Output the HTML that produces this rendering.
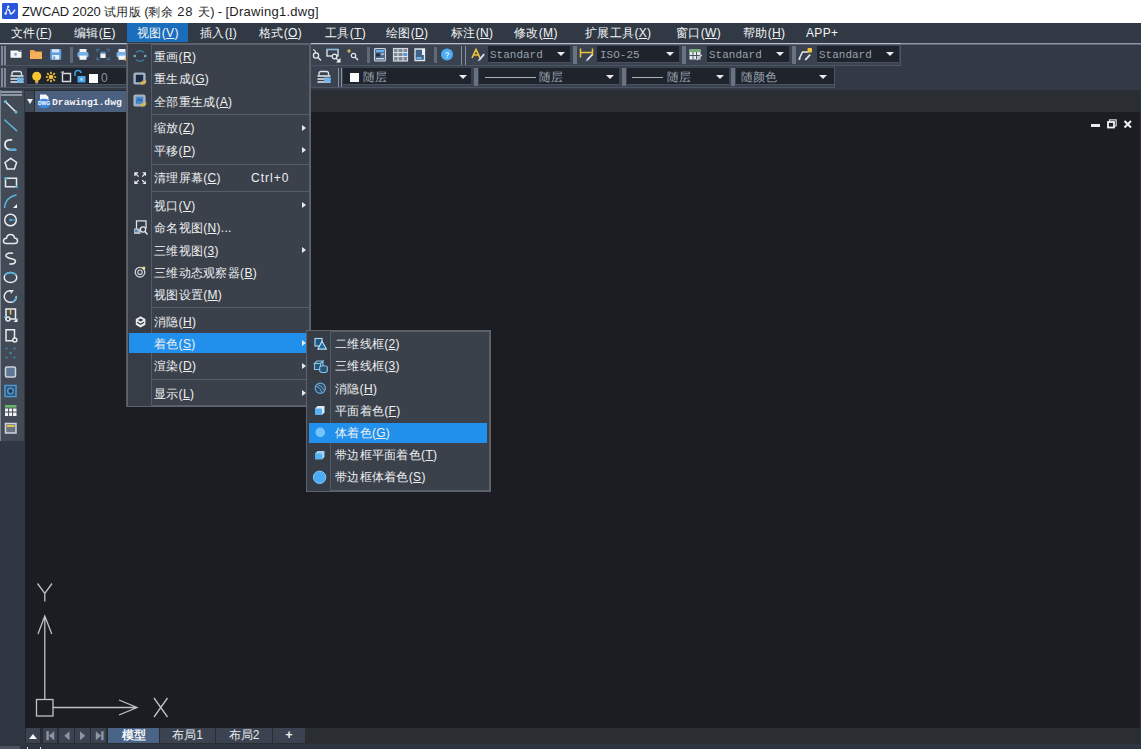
<!DOCTYPE html>
<html lang="zh">
<head>
<meta charset="utf-8">
<title>ZWCAD 2020</title>
<style>
*{box-sizing:border-box;margin:0;padding:0}
html,body{width:1141px;height:749px;overflow:hidden;background:#1b1d22}
body{position:relative;font-family:"Liberation Sans",sans-serif;font-size:12px;color:#e8ebef}
.abs,#app *{position:absolute}
#app{position:absolute;left:0;top:0;width:1141px;height:749px;overflow:hidden;background:#1b1d22}
.t{white-space:nowrap;line-height:1}
u{position:static!important;text-decoration:underline;text-underline-offset:1px}
span{position:static!important}

/* title */
#title{left:0;top:0;width:1141px;height:23px;background:#fff}
#title .txt{left:22px;top:4px;font-size:13px;color:#1e1e1e;line-height:15px;white-space:nowrap;letter-spacing:-.15px}
#title .c{font-size:12px;letter-spacing:.2px}
#title .l{letter-spacing:.28px}
#title .n{letter-spacing:.85px}
/* menubar */
#menubar{left:0;top:23px;width:1141px;height:20px;background:#313944}
#menubar .mi{top:0;height:20px;line-height:20px;font-size:12px;color:#f2f4f6;white-space:nowrap;letter-spacing:.35px}
#menubar .hl{left:127px;top:0;width:61px;height:19px;background:#1a6dbb}
#mline{left:0;top:43px;width:1141px;height:1px;background:linear-gradient(90deg,#b8c0ce 0,#b8c0ce 901px,#8e97a5 901px)}
#mline2{left:0;top:44px;width:1141px;height:1px;background:#5e6776}
/* toolbar area */
#tbarea{left:0;top:44px;width:1141px;height:46px;background:#333a45}
.tb{background:#3a424f}
.combo{background:#1e232c;border-bottom:1px solid #4a5361}
.mono{font-family:"Liberation Mono",monospace;font-size:11px;color:#9aa2ad;line-height:1;white-space:nowrap}
.cjk{font-size:12px;color:#9aa2ad;line-height:1;white-space:nowrap}
.grip{width:4px;background:#687280}
.arr{width:0;height:0;border-left:4px solid transparent;border-right:4px solid transparent;border-top:4px solid #e6e9ed}
/* tab band */
#tabband{left:0;top:90px;width:1141px;height:22px;background:#2a2d32}
#leftdock{left:0;top:89px;width:25px;height:660px;background:#303742}
#ltb{left:0;top:90px;width:24px;height:351px;background:#424a56}
/* drawing */
#draw{left:25px;top:112px;width:1116px;height:616px;background:#1b1d22}
#btband{left:25px;top:728px;width:1116px;height:16px;background:#2a2d32}
#cmdband{left:0;top:744px;width:1141px;height:5px;background:#2f3540}
/* menus */
.menu{background:#3b414a;border:1px solid #5f636b;outline:1px solid #5a5e66;outline-offset:-2px}
.menu .gut{left:0;top:0;bottom:0;background:#373d46;border-right:1px solid #545c68}
.menu .it{font-size:12px;color:#eef0f3;white-space:nowrap;line-height:14px;letter-spacing:.3px}
.menu .sep{height:1px;background:#555e6b}
.menu .sub{width:0;height:0;border-top:3.500px solid transparent;border-bottom:3.500px solid transparent;border-left:4.500px solid #e9ecef;margin-top:.5px}
.menu .hl{background:#2190ec}
</style>
</head>
<body>
<div id="app">

<div id="title">
  <svg class="abs" style="left:2px;top:3px" width="16" height="16" viewBox="0 0 16 16"><rect width="16" height="16" rx="1.200" fill="#2a56d9"/><path d="M3.700 10.400L6.100 3.800" stroke="#dfe8ff" stroke-width="1.200" fill="none" stroke-linecap="round"/><path d="M6.300 6.800q1.600.2 1.600 2.200t1 2q1.600-.2 3.800-3.800" stroke="#f2f6ff" stroke-width="1.400" fill="none" stroke-linecap="round"/><circle cx="3.700" cy="10.500" r="1.300" fill="#e8efff"/><circle cx="6.200" cy="3.700" r="1.200" fill="#e8efff"/></svg>
  <div class="txt" id="tt">ZWCAD 2020 <span class="c">试用版</span> (<span class="c">剩余</span><span class="n"> 28 </span><span class="c">天</span>) - <span class="l">[Drawing1.dwg]</span></div>
</div>

<div id="menubar">
  <div class="hl"></div>
  <div class="mi" style="left:11px">文件(<u>F</u>)</div>
  <div class="mi" style="left:74px">编辑(<u>E</u>)</div>
  <div class="mi" style="left:137px">视图(<u>V</u>)</div>
  <div class="mi" style="left:200px">插入(<u>I</u>)</div>
  <div class="mi" style="left:259px">格式(<u>O</u>)</div>
  <div class="mi" style="left:325px">工具(<u>T</u>)</div>
  <div class="mi" style="left:386px">绘图(<u>D</u>)</div>
  <div class="mi" style="left:451px">标注(<u>N</u>)</div>
  <div class="mi" style="left:514px">修改(<u>M</u>)</div>
  <div class="mi" style="left:585px">扩展工具(<u>X</u>)</div>
  <div class="mi" style="left:676px">窗口(<u>W</u>)</div>
  <div class="mi" style="left:743px">帮助(<u>H</u>)</div>
  <div class="mi" style="left:806px">APP+</div>
</div>
<div id="mline"></div>

<div id="tbarea"></div>
<div id="tabband"></div>
<div id="leftdock"></div>
<div id="ltb"></div>
<div id="draw"></div>
<div id="btband"></div>
<div id="cmdband"></div>

<!--TOOLBARS-->
<!-- toolbar row 1 -->
<div class="tb" style="left:0;top:44px;width:901px;height:22px;border-right:1px solid #4c5562;border-bottom:1px solid #4c5562"></div>
<div class="tb" style="left:0;top:66px;width:835px;height:22px;border-right:1px solid #4c5562;border-bottom:1px solid #4c5562"></div>
<!-- grips -->
<div style="left:1px;top:46px;width:2px;height:19px;background:#7f8997"></div>
<div style="left:4px;top:46px;width:2px;height:19px;background:#7f8997"></div>
<div style="left:1px;top:68px;width:2px;height:19px;background:#7f8997"></div>
<div style="left:4px;top:68px;width:2px;height:19px;background:#7f8997"></div>

<!-- row1 icons left -->
<svg style="left:9px;top:47px" width="16" height="16" viewBox="0 0 16 16"><path d="M1.5 3.5h7.5l1 1.300H12.500v6H1.5z" fill="#f4f6f8"/><circle cx="6.500" cy="7.200" r="1.500" fill="#8aa7c4"/><rect x="11" y="3" width="1.400" height="1.200" fill="#9fb4cc"/></svg>
<svg style="left:28px;top:47px" width="16" height="16" viewBox="0 0 16 16"><path d="M2 3h4.2l1.2 1.6H14V12H2z" fill="#f3a64a"/><path d="M2 5.6h12V12H2z" fill="#f7b05a"/></svg>
<svg style="left:48px;top:47px" width="16" height="16" viewBox="0 0 16 16"><path d="M2.2 2.2h11v10.4h-11z" fill="#5f9fe0"/><rect x="4" y="2.2" width="7.2" height="3.2" fill="#d9e8f7"/><rect x="4.2" y="8" width="7" height="4.6" fill="#e8f0f9"/><rect x="5.2" y="9.4" width="2" height="3.2" fill="#5f9fe0"/></svg>
<div style="left:70px;top:47px;width:3px;height:16px;background:#5f6978"></div>
<svg style="left:75px;top:47px" width="16" height="16" viewBox="0 0 16 16"><rect x="4.5" y="2" width="7" height="3.4" fill="#eef3f8"/><rect x="2.500" y="5" width="11" height="5.400" rx="1.500" fill="#78b0e8"/><rect x="4.5" y="8.6" width="7" height="4.2" fill="#f4f7fa"/></svg>
<svg style="left:95px;top:47px" width="16" height="16" viewBox="0 0 16 16"><path d="M2 5V2.500h2.500M11.500 2.500H14V5M14 10v2.500h-2.500M4.500 12.500H2V10" stroke="#3f7099" stroke-width="1.300" fill="none"/><rect x="5.400" y="4.600" width="5.200" height="2.400" fill="#4d86b8"/><rect x="5.400" y="6.600" width="5.200" height="4.400" fill="#eef3f8"/></svg>
<svg style="left:114px;top:47px" width="16" height="16" viewBox="0 0 16 16"><rect x="4.5" y="2" width="7" height="3.4" fill="#eef3f8"/><rect x="2.500" y="5" width="11" height="5.400" rx="1.500" fill="#78b0e8"/><rect x="4.5" y="8.6" width="7" height="4.2" fill="#f4f7fa"/><circle cx="12.5" cy="12" r="2" fill="#f0b240"/></svg>

<!-- row1 icons after menu -->
<svg style="left:308px;top:47px" width="16" height="16" viewBox="0 0 16 16"><path d="M5 2.500q3 1 2.500 4" stroke="#dfe5ec" stroke-width="1.2" fill="none"/><circle cx="8" cy="8.5" r="2.600" stroke="#e6ebf0" stroke-width="1.3" fill="none"/><path d="M10 10.500L13 13.500" stroke="#e6ebf0" stroke-width="1.500"/></svg>
<svg style="left:325px;top:47px" width="17" height="16" viewBox="0 0 17 16"><rect x="2" y="2.500" width="11" height="6.500" stroke="#e6ebf0" stroke-width="1.300" fill="none"/><path d="M2 2.500h11" stroke="#7cbcec" stroke-width="1.300"/><circle cx="9.500" cy="9.500" r="2.300" stroke="#e6ebf0" stroke-width="1.200" fill="#3a424f"/><path d="M11.200 11.200L13.500 13.500" stroke="#e6ebf0" stroke-width="1.400"/><path d="M15.500 11v4.500H11z" fill="#f4f6f8"/></svg>
<svg style="left:345px;top:47px" width="16" height="16" viewBox="0 0 16 16"><path d="M4 2v4M2 4h4" stroke="#e8c86a" stroke-width="1.100"/><circle cx="8.500" cy="8.500" r="2.200" stroke="#dfe5ec" stroke-width="1.200" fill="none"/><path d="M10.200 10.200L13 13" stroke="#dfe5ec" stroke-width="1.400"/></svg>
<div style="left:367px;top:47px;width:3px;height:16px;background:#5f6978"></div>
<svg style="left:372px;top:46px" width="16" height="18" viewBox="0 0 16 18"><rect x="2.500" y="2.500" width="11" height="12.500" rx="1" stroke="#c9d3de" stroke-width="1.200" fill="#4b6a8c"/><rect x="4" y="4" width="8" height="2.200" fill="#6fb0e8"/><rect x="4" y="7.500" width="4" height="3" fill="#20303f"/><rect x="9" y="7.500" width="3" height="1.200" fill="#cfd9e4"/><rect x="4" y="12" width="8" height="1.400" fill="#cfd9e4"/></svg>
<svg style="left:392px;top:46px" width="17" height="18" viewBox="0 0 17 18"><rect x="1.500" y="2.500" width="14" height="12.500" stroke="#cfd6de" stroke-width="1.200" fill="#7b8794"/><path d="M6 2.500v12.500M11 2.500v12.500M1.500 6.500h14M1.500 10.500h14" stroke="#dfe5eb" stroke-width="1"/><rect x="11.500" y="7" width="3.500" height="3" fill="#5d9ad6"/></svg>
<svg style="left:412px;top:46px" width="16" height="18" viewBox="0 0 16 18"><path d="M3 3h9.500v11.500H3z" stroke="#dfe5eb" stroke-width="1.300" fill="#3f648c"/><path d="M10 3h3v6h-3z" fill="#eef2f6"/><rect x="4.500" y="11" width="5" height="2" fill="#6fb0e8"/></svg>
<div style="left:434px;top:47px;width:3px;height:16px;background:#5f6978"></div>
<svg style="left:440px;top:48px" width="14" height="14" viewBox="0 0 14 14"><circle cx="7" cy="6.500" r="6" fill="#4dacf3"/><text x="7" y="9.600" text-anchor="middle" font-family="Liberation Sans" font-size="8.500" font-weight="bold" fill="#cfe9ff">?</text></svg>
<div style="left:460.7px;top:46px;width:1.500px;height:19px;background:#8791a0"></div>
<div style="left:464.7px;top:46px;width:1.500px;height:19px;background:#8791a0"></div>

<!-- text style -->
<svg style="left:470px;top:47px" width="16" height="16" viewBox="0 0 16 16"><path d="M2 11L6 2.500L10 11M3.600 8h4.800" stroke="#f0c23a" stroke-width="1.700" fill="none"/><path d="M8.500 12.500L13.500 6.500l1.300 1.200L10 13.500z" fill="#dfe6ee"/><path d="M8.500 12.500l1.500 1-2.500 1z" fill="#9ec3e8"/></svg>
<div class="combo" style="left:488px;top:46px;width:82px;height:17px"></div>
<div class="mono" style="left:490px;top:50px">Standard</div>
<div class="arr" style="left:557px;top:52px"></div>
<div class="grip" style="left:573px;top:46px;height:18px"></div>
<svg style="left:579px;top:47px" width="16" height="16" viewBox="0 0 16 16"><path d="M1.500 1.500v9M13.500 1.500v7M1.500 5.500h12" stroke="#f0c23a" stroke-width="1.500" fill="none"/><path d="M7.500 12.500L12.500 7l1.300 1.200L9 13.500z" fill="#dfe6ee"/><path d="M7.500 12.500l1.500 1-2.500 1z" fill="#9ec3e8"/></svg>
<div class="combo" style="left:597px;top:46px;width:82px;height:17px"></div>
<div class="mono" style="left:600px;top:50px">ISO-25</div>
<div class="arr" style="left:666px;top:52px"></div>
<div class="grip" style="left:682px;top:46px;height:18px"></div>
<svg style="left:688px;top:47px" width="16" height="16" viewBox="0 0 16 16"><rect x="1.500" y="2.500" width="11" height="10" fill="#e9edf1"/><rect x="1.500" y="2.500" width="11" height="2.600" fill="#6fb16a"/><path d="M5 5v7.500M8.500 5v7.500M1.500 8.500h11" stroke="#4a5260" stroke-width="1"/><path d="M8 12.500L13 7l1.300 1.200L9.500 13.500z" fill="#dfe6ee" stroke="#4a5260" stroke-width=".5"/></svg>
<div class="combo" style="left:707px;top:46px;width:82px;height:17px"></div>
<div class="mono" style="left:709px;top:50px">Standard</div>
<div class="arr" style="left:776px;top:52px"></div>
<div class="grip" style="left:792px;top:46px;height:18px"></div>
<svg style="left:797px;top:47px" width="17" height="16" viewBox="0 0 17 16"><path d="M2 12l3.500-7h6" stroke="#e6ebf0" stroke-width="1.500" fill="none"/><path d="M1.500 13.500l.6-3 2 1.300z" fill="#e6ebf0"/><rect x="10.500" y="1" width="4.500" height="4.500" rx="1" fill="#f1c63c"/><path d="M7.500 12.500L12.500 7l1.300 1.200L9 13.500z" fill="#dfe6ee"/></svg>
<div class="combo" style="left:817px;top:46px;width:82px;height:17px"></div>
<div class="mono" style="left:819px;top:50px">Standard</div>
<div class="arr" style="left:886px;top:52px"></div>

<!-- row 2 -->
<svg style="left:9px;top:69px" width="16" height="16" viewBox="0 0 16 16"><path d="M3 6.500V4.500q0-2 2-2h5.500q2 0 2 2v2" stroke="#dfe5eb" stroke-width="1.300" fill="none"/><path d="M1.500 7h13M1.500 10h13M1.500 13h13" stroke="#e6ebf0" stroke-width="1.400"/><rect x="8" y="8.500" width="6.500" height="5" fill="#6fb6ee"/></svg>
<div class="combo" style="left:27px;top:68px;width:282px;height:17px"></div>
<svg style="left:30px;top:69px" width="14" height="16" viewBox="0 0 14 16"><circle cx="6.700" cy="7.300" r="4.500" fill="#f6c531"/><rect x="5" y="11.200" width="3.400" height="2.300" fill="#e8b62a"/><rect x="5.400" y="13.500" width="2.600" height="1" fill="#b9bdc2"/></svg>
<svg style="left:44px;top:70px" width="14" height="14" viewBox="0 0 14 14"><circle cx="7" cy="7" r="2.300" fill="#f6c531"/><path d="M7 1.800v2.200M7 10v2.200M1.800 7h2.200M10 7h2.200M3.200 3.200l1.600 1.600M9.200 9.200l1.600 1.600M10.800 3.200l-1.600 1.600M4.800 9.200l-1.600 1.600" stroke="#e9bd38" stroke-width="1.700"/></svg>
<svg style="left:59px;top:70px" width="14" height="14" viewBox="0 0 14 14"><path d="M3.500 3.500h8v8h-8z" stroke="#d7dce2" stroke-width="1.400" fill="none"/><path d="M1 2l4-1v3z" fill="#aab2bd"/></svg>
<svg style="left:73px;top:68px" width="14" height="17" viewBox="0 0 14 17"><path d="M2 8V5.500q0-3 3-3t3 2.500" stroke="#3b9be0" stroke-width="1.700" fill="none"/><rect x="4.500" y="8" width="8" height="6.500" fill="#4aa6ea"/><rect x="7.500" y="10" width="2" height="2.500" fill="#bfe0f8"/></svg>
<div style="left:89px;top:74px;width:9px;height:9px;background:#fafbfc"></div>
<div class="t" style="left:101px;top:72px;color:#8a929e;font-size:12px">0</div>

<svg style="left:316px;top:69px" width="16" height="16" viewBox="0 0 16 16"><path d="M3 6.500V4.500q0-2 2-2h5.500q2 0 2 2v2" stroke="#dfe5eb" stroke-width="1.300" fill="none"/><path d="M1.500 7h13M1.500 10h13M1.500 13h13" stroke="#e6ebf0" stroke-width="1.400"/><rect x="8" y="8.500" width="6.500" height="5" fill="#6fb6ee"/></svg>
<div style="left:337.7px;top:68px;width:1.500px;height:19px;background:#8791a0"></div>
<div style="left:340.7px;top:68px;width:1.500px;height:19px;background:#8791a0"></div>
<div class="combo" style="left:343px;top:68px;width:128px;height:17px"></div>
<div style="left:350px;top:73px;width:9px;height:9px;background:#fafbfc"></div>
<div class="cjk" style="left:363px;top:71px">随层</div>
<div class="arr" style="left:459px;top:75px"></div>
<div class="grip" style="left:474px;top:68px;height:18px"></div>
<div class="combo" style="left:479px;top:68px;width:140px;height:17px"></div>
<div style="left:485px;top:77px;width:51px;height:1px;background:#aab1bb"></div>
<div class="cjk" style="left:539px;top:71px">随层</div>
<div class="arr" style="left:606px;top:75px"></div>
<div class="grip" style="left:622px;top:68px;height:18px"></div>
<div class="combo" style="left:627px;top:68px;width:102px;height:17px"></div>
<div style="left:632px;top:77px;width:31px;height:1px;background:#aab1bb"></div>
<div class="cjk" style="left:667px;top:71px">随层</div>
<div class="arr" style="left:716px;top:75px"></div>
<div class="grip" style="left:731px;top:68px;height:18px"></div>
<div class="combo" style="left:736px;top:68px;width:98px;height:17px"></div>
<div class="cjk" style="left:741px;top:71px">随颜色</div>
<div class="arr" style="left:819px;top:75px"></div>
<div id="mline2"></div>
<!--/TOOLBARS-->
<!--TABS-->
<!-- doc tab -->
<div style="left:25px;top:91px;width:9px;height:21px;background:#3e4653"></div>
<div style="left:27px;top:99px;width:0;height:0;border-left:3px solid transparent;border-right:3px solid transparent;border-top:5px solid #f1f3f5"></div>
<div style="left:35px;top:91px;width:92px;height:21px;background:#4b5f7f"></div>
<svg style="left:36px;top:93px" width="16" height="17" viewBox="0 0 16 17"><path d="M4 1.500h6l2.500 2.500v4H4z" fill="#f4f6f9"/><ellipse cx="8" cy="10.500" rx="6.500" ry="4.800" fill="#3f86dc"/><text x="8" y="12.300" text-anchor="middle" font-family="Liberation Sans" font-size="5" font-weight="bold" fill="#fff">DWG</text></svg>
<div class="t" style="left:52px;top:98px;font-family:'Liberation Mono',monospace;font-weight:bold;font-size:9.7px;color:#f4f6f8">Drawing1.dwg</div>

<!-- window controls -->
<div style="left:1091px;top:124px;width:9px;height:3px;background:#e9ecef"></div>
<svg style="left:1107px;top:119px" width="10" height="10" viewBox="0 0 10 10"><path d="M2.500 2.500V.8H9.200V7H7.500" stroke="#cfd3d8" stroke-width="1.200" fill="none"/><rect x="1" y="3" width="6" height="5.500" stroke="#f1f3f5" stroke-width="1.800" fill="none"/></svg>
<svg style="left:1123px;top:119px" width="10" height="10" viewBox="0 0 10 10"><path d="M1.500 2l6.500 6.500M8 2L1.500 8.500" stroke="#f1f3f5" stroke-width="2"/></svg>
<!--/TABS-->
<!--LEFTICONS-->
<!-- left toolbar grips -->
<div style="left:0;top:91px;width:22px;height:2px;background:#8d97a4"></div>
<div style="left:0;top:94px;width:22px;height:2px;background:#8d97a4"></div>
<div style="left:0;top:90px;width:1px;height:351px;background:#7d8795"></div>
<svg style="left:0;top:97px" width="23" height="345" viewBox="0 0 23 345">
 <g fill="none" stroke="#e8ebef" stroke-width="1.500" stroke-linecap="round">
  <!-- line y=9.5 (106.5) -->
  <path d="M5.300 4.500L16 15" stroke="#e8ebef" stroke-width="1.500"/><circle cx="5.300" cy="4.500" r="1.600" fill="#62b6e6" stroke="none"/><circle cx="16" cy="15" r="1.600" fill="#62b6e6" stroke="none"/>
  <!-- xline 125 => 28 -->
  <path d="M4.700 23L16.700 33.700" stroke="#5ab5dc" stroke-width="1.500" stroke-dasharray="4 1.200"/>
  <!-- polyline 144 => 47 -->
  <path d="M11.500 42.800q-6.500-.3-6.500 4.500t5 5.400h5.500" stroke-width="1.800"/><path d="M9.500 52.800h6" stroke="#4fb0e0" stroke-width="2"/>
  <!-- polygon 163 => 66 -->
  <path d="M10.800 61.300l5.800 4.200-2.200 6.500h-7.200l-2.200-6.500z"/>
  <!-- rectangle 182 => 85 -->
  <path d="M5.500 81.300h11v8.500h-11z"/><circle cx="5.500" cy="81.300" r="1.400" fill="#4fb0e0" stroke="none"/><circle cx="16.500" cy="89.800" r="1.400" fill="#4fb0e0" stroke="none"/>
  <!-- arc 201 => 104 -->
  <path d="M4.500 110.500q1-10 11.500-12.500" stroke="#5ab0dc" stroke-width="1.600"/><path d="M17 107v4h-4z" fill="#f1f3f5" stroke="none"/>
  <!-- circle 220 => 123 -->
  <circle cx="10.500" cy="123" r="5.800"/><circle cx="10.500" cy="123" r="1.300" fill="#4fb0e0" stroke="none"/><path d="M10.500 123h5" stroke="#4fb0e0" stroke-width="1"/>
  <!-- cloud 239 => 142 -->
  <path d="M6 146.500q-3-.5-2.500-3t3-2.300q.5-3.700 4-3.700t4 3.500q3 0 3 2.800t-3 2.700z"/>
  <!-- spline 258 => 161 -->
  <path d="M12.500 156.200C8 155.200 4.500 157.500 6.500 159.800S15.500 161.500 15.500 164S13 167.200 9.800 167" />
  <!-- ellipse 277 => 180 -->
  <ellipse cx="10.500" cy="180.500" rx="6.300" ry="5"/><path d="M5 177.500q5-4 11 0" stroke="#4fb0e0" stroke-width="1.500"/>
  <!-- ellipse arc 296 => 199 -->
  <path d="M11 193.800C6.500 193.500 4 196.500 4.200 199.800S7.500 205.500 10.800 205.300S16.500 202.500 16.300 199.500"/><path d="M9.500 193.800l3.200-.2-1.600 2.400" stroke-width="1.200"/><path d="M13 204.600q2.800-1.400 3.300-4.600" stroke="#4fb0e0"/>
  <!-- insert block 315 => 218 -->
  <rect x="6" y="212" width="9.500" height="10" /><circle cx="8" cy="222" r="2" fill="#424a56"/><path d="M17.500 221v4h-4z" fill="#f1f3f5" stroke="none"/><path d="M10.500 213v4" stroke="#e8c25a"/><circle cx="5" cy="220" r="1" fill="#4fb0e0" stroke="none"/>
  <!-- make block 334 => 237 -->
  <path d="M6 232.800h8.500v11h-8.500z"/><circle cx="14.800" cy="243" r="2" fill="#424a56"/>
  <!-- point 353 => 256 -->
  <g fill="#3f8fb8" stroke="none"><circle cx="6.500" cy="251.500" r="1"/><circle cx="14.500" cy="251.500" r="1"/><circle cx="10.500" cy="256" r="1.200"/><circle cx="6.500" cy="260.500" r="1"/><circle cx="14.500" cy="260.500" r="1"/></g>
  <!-- hatch 372 => 275 -->
  <rect x="5.500" y="270" width="10" height="10" rx="1.500" fill="#5f7796" stroke="#cfd5dc"/>
  <!-- region 391 => 294 -->
  <rect x="5" y="288.500" width="11" height="11" stroke="#4a9ad6" fill="#34506f"/><circle cx="10.500" cy="294" r="2.800" stroke="#4a9ad6" fill="#27394e"/>
  <!-- table 410 => 313 -->
  <g stroke="none"><rect x="5" y="308" width="11.500" height="2.600" fill="#6cb36a"/><rect x="5" y="311.500" width="11.500" height="7.500" fill="#f1f3f5"/><path d="M8.600 311.500v7.500M12.600 311.500v7.500M5 315h11.500" stroke="#424a56" stroke-width="1"/></g>
  <!-- mtext 428.500 => 331.500 -->
  <rect x="5.500" y="326.500" width="10.500" height="9.500" stroke="#cfd5dc" fill="#6a7482"/><rect x="7" y="328" width="7.500" height="2" fill="#e2c34c" stroke="none"/>
 </g>
</svg>
<!--/LEFTICONS-->
<!--UCS-->
<svg style="left:25px;top:570px" width="160" height="158" viewBox="0 0 160 158">
 <g fill="none" stroke="#bfc2c7" stroke-width="1.300">
  <path d="M12.500 13.500L19.800 23.500L27 13.500M19.800 23.500V31.500"/>
  <path d="M19.800 129.500V46.500M13 64L19.800 46L26.800 64"/>
  <rect x="11.500" y="129.500" width="16.500" height="16.500"/>
  <path d="M28 137.500H112M94 130L112 137.500L94 145"/>
  <path d="M129 128L142.500 147M142.500 128L129 147"/>
 </g>
</svg>
<!--/UCS-->
<!--BOTTOMTABS-->
<div style="left:26px;top:728.400px;width:14px;height:14.500px;background:#3b4350"></div>
<div style="left:28.500px;top:734px;width:0;height:0;border-left:4.800px solid transparent;border-right:4.800px solid transparent;border-bottom:5px solid #f4f6f8"></div>
<div style="left:43px;top:728.400px;width:14px;height:14.500px;background:#3b4350"></div>
<div style="left:59px;top:728.400px;width:15px;height:14.500px;background:#3b4350"></div>
<div style="left:75px;top:728.400px;width:15px;height:14.500px;background:#3b4350"></div>
<div style="left:91px;top:728.400px;width:15px;height:14.500px;background:#3b4350"></div>
<svg style="left:43px;top:728px" width="64" height="15" viewBox="0 0 64 15"><g fill="#8d96a3"><rect x="3.400" y="3.200" width="2.400" height="9"/><path d="M11.200 3.200v9L5.800 7.700z"/><path d="M26.500 3.200v9L21.300 7.700z"/><path d="M37 3.200v9L42.200 7.700z"/><path d="M52.800 3.200v9L58.200 7.700z"/><rect x="58.200" y="3.200" width="2.400" height="9"/></g></svg>
<div style="left:108px;top:728.400px;width:51px;height:14.500px;background:#4a6488"></div>
<div class="t" style="left:108px;top:729px;width:51px;text-align:center;font-size:12px;font-weight:bold;color:#f4f6f8;line-height:13px">模型</div>
<div style="left:160px;top:728.400px;width:55px;height:14.500px;background:#3b4350"></div>
<div class="t" style="left:160px;top:729px;width:55px;text-align:center;font-size:12px;color:#e6e9ed;line-height:13px">布局1</div>
<div style="left:216px;top:728.400px;width:56px;height:14.500px;background:#3b4350"></div>
<div class="t" style="left:216px;top:729px;width:56px;text-align:center;font-size:12px;color:#e6e9ed;line-height:13px">布局2</div>
<div style="left:273px;top:728.400px;width:32px;height:14.500px;background:#3b4350"></div>
<div class="t" style="left:273px;top:728px;width:32px;text-align:center;font-size:12px;font-weight:bold;color:#f4f6f8;line-height:14px">+</div>
<div style="left:0;top:746px;width:20px;height:3px;background:#4a5260"></div>
<div style="left:27px;top:747px;width:1px;height:2px;background:#d9dde2"></div>
<div style="left:40px;top:747px;width:1px;height:2px;background:#d9dde2"></div>
<div style="left:1140px;top:89px;width:1px;height:660px;background:#2e333b"></div>
<!--/BOTTOMTABS-->
<!--MENUS-->
<div style="left:126px;top:44px;width:1px;height:363px;background:#55595f"></div>
<div style="left:306px;top:329.500px;width:185px;height:1px;background:#4a4e55"></div>
<div class="menu" id="m1" style="left:127px;top:43px;width:184px;height:364px">
<div class="gut" style="width:23.500px"></div>
<div class="it" style="left:26px;top:5.6px">重画(<u>R</u>)</div>
<div class="it" style="left:26px;top:28.1px">重生成(<u>G</u>)</div>
<div class="it" style="left:26px;top:50.6px">全部重生成(<u>A</u>)</div>
<div class="sep" style="left:24px;top:70.0px;width:158px"></div>
<div class="it" style="left:26px;top:77.1px">缩放(<u>Z</u>)</div>
<div class="sub" style="left:174px;top:80.0px"></div>
<div class="it" style="left:26px;top:99.6px">平移(<u>P</u>)</div>
<div class="sub" style="left:174px;top:102.5px"></div>
<div class="sep" style="left:24px;top:120.0px;width:158px"></div>
<div class="it" style="left:26px;top:127.1px">清理屏幕(<u>C</u>)</div>
<div class="it" style="left:123px;top:127.1px;letter-spacing:1px">Ctrl+0</div>
<div class="sep" style="left:24px;top:147.0px;width:158px"></div>
<div class="it" style="left:26px;top:154.6px">视口(<u>V</u>)</div>
<div class="sub" style="left:174px;top:157.5px"></div>
<div class="it" style="left:26px;top:177.1px">命名视图(<u>N</u>)...</div>
<div class="it" style="left:26px;top:199.6px">三维视图(<u>3</u>)</div>
<div class="sub" style="left:174px;top:202.5px"></div>
<div class="it" style="left:26px;top:221.6px">三维动态观察器(<u>B</u>)</div>
<div class="it" style="left:26px;top:243.6px">视图设置(<u>M</u>)</div>
<div class="sep" style="left:24px;top:263.0px;width:158px"></div>
<div class="it" style="left:26px;top:270.6px">消隐(<u>H</u>)</div>
<div class="hl" style="left:1px;top:288.700px;width:180px;height:20.500px"></div>
<div class="it" style="left:26px;top:292.6px">着色(<u>S</u>)</div>
<div class="sub" style="left:174px;top:295.5px"></div>
<div class="it" style="left:26px;top:315.1px">渲染(<u>D</u>)</div>
<div class="sub" style="left:174px;top:318.0px"></div>
<div class="sep" style="left:24px;top:334.5px;width:158px"></div>
<div class="it" style="left:26px;top:342.6px">显示(<u>L</u>)</div>
<div class="sub" style="left:174px;top:345.5px"></div>
<svg style="left:4px;top:4px" width="16" height="16" viewBox="0 0 16 16"><path d="M4 4.500A5.300 5.300 0 0 1 12 4.500M12 11.500A5.300 5.300 0 0 1 4 11.500" fill="none" stroke="#3a7898" stroke-width="1.400"/><circle cx="2.800" cy="8" r="1.300" fill="#6ab4d4"/><circle cx="13.200" cy="8" r="1.300" fill="#6ab4d4"/></svg>
<svg style="left:5px;top:28px" width="15" height="15" viewBox="0 0 15 15"><rect x="1.600" y="1.600" width="9.800" height="9.800" rx="1" fill="#1b2c44" stroke="#a7b3c3" stroke-width="2.400"/><path d="M7.200 10.800l2.600-2.600v1.600l3.400-1.600v2.600l-3.400 1.200v1.400z" fill="#dcb545"/></svg>
<svg style="left:5px;top:50px" width="15" height="15" viewBox="0 0 15 15"><rect x="1.600" y="1.600" width="9.800" height="9.800" rx="1" fill="#4a8ad0" stroke="#a7b3c3" stroke-width="2.400"/><path d="M3.500 8l2.500-3 2 2 1.500-2" stroke="#2c5f98" stroke-width="1.100" fill="none"/><path d="M7.200 10.800l2.600-2.600v1.600l3.400-1.600v2.600l-3.400 1.200v1.400z" fill="#dcb545"/></svg>
<svg style="left:5.700px;top:127.500px" width="12.800" height="12.800" viewBox="0 0 14 14"><g stroke="#eef0f3" stroke-width="1.300" fill="none"><path d="M1 4.500V1h3.500M1.300 1.300l3.700 3.700"/><path d="M9.500 1H13v3.500M12.700 1.300L9 5"/><path d="M13 9.500V13H9.500M12.700 12.700L9 9"/><path d="M4.500 13H1V9.500M1.300 12.700L5 9"/></g></svg>
<svg style="left:5px;top:174.600px" width="16" height="17" viewBox="0 0 16 17"><path d="M3.500 10V1.800h9.500v8" stroke="#dfe4ea" stroke-width="1.300" fill="none"/><rect x="1" y="9.500" width="6.500" height="5.500" fill="#aeb9c6"/><rect x="2" y="11" width="2.500" height="2" fill="#3f86c8"/><circle cx="10" cy="10.500" r="2.600" stroke="#e6eaef" stroke-width="1.200" fill="#373d46"/><path d="M12 12.500l2.500 3" stroke="#e6eaef" stroke-width="1.300"/></svg>
<svg style="left:5px;top:221px" width="16" height="16" viewBox="0 0 16 16"><circle cx="7" cy="7.200" r="4.800" stroke="#cfd4da" stroke-width="1.300" fill="none"/><circle cx="7" cy="7.200" r="2.200" stroke="#cfd4da" stroke-width="1.200" fill="none"/><circle cx="10.800" cy="3" r="1.600" fill="#efe08a"/></svg>
<svg style="left:5.600px;top:270.800px" width="13.200" height="14" viewBox="0 0 15 16"><path d="M7.500 1.500l5.500 3v6.500l-5.500 3.300L2 11V4.500z" fill="#e9ecef"/><path d="M4.300 5.600l3.200-1.700 3.200 1.700-3.200 1.900z" fill="#373d46"/><path d="M3.500 8.200l4 2.400 4-2.400" stroke="#363d48" stroke-width="1.300" fill="none"/></svg>
</div>
<div class="menu" id="m2" style="left:306px;top:330px;width:185px;height:162px">
<div class="gut" style="width:24px"></div>
<div class="it" style="left:28px;top:6.2px">二维线框(<u>2</u>)</div>
<div class="it" style="left:28px;top:28.4px">三维线框(<u>3</u>)</div>
<div class="it" style="left:28px;top:50.6px">消隐(<u>H</u>)</div>
<div class="it" style="left:28px;top:72.8px">平面着色(<u>F</u>)</div>
<div class="hl" style="left:2px;top:91.8px;width:178px;height:20px"></div>
<div class="it" style="left:28px;top:95.0px">体着色(<u>G</u>)</div>
<div class="it" style="left:28px;top:117.2px">带边框平面着色(<u>T</u>)</div>
<div class="it" style="left:28px;top:139.4px">带边框体着色(<u>S</u>)</div>
<svg style="left:6px;top:6px" width="15" height="14" viewBox="0 0 15 14"><rect x="2" y="1.500" width="7" height="7.500" fill="#1e557c" stroke="#a8d2ee" stroke-width="1.200"/><path d="M9 4.200l4.500 8H4.800z" fill="#1e6a96" stroke="#b9dcf3" stroke-width="1.200" stroke-linejoin="round"/></svg>
<svg style="left:6px;top:28px" width="16" height="15" viewBox="0 0 16 15"><g stroke="#8cc2e6" stroke-width="1.100" fill="#2a5474"><path d="M1.500 4.500L4 2h6l-2.500 2.500zM1.500 4.500h6v6h-6zM7.500 4.500L10 2v6l-2.500 2.500"/><ellipse cx="10.500" cy="8.500" rx="3.800" ry="1.800"/><path d="M6.700 8.500v3.200a3.800 1.800 0 0 0 7.600 0V8.500" fill="#2a5474"/></g></svg>
<svg style="left:7px;top:51px" width="13" height="13" viewBox="0 0 13 13"><circle cx="6.300" cy="6.300" r="5.100" fill="#2f4a63" stroke="#6aa9d6" stroke-width="1.200"/><path d="M2 4q4 1 6.500 7M3.500 2.500q5 1.500 7 6" stroke="#6aa9d6" stroke-width="1" fill="none"/></svg>
<svg style="left:7px;top:74px" width="12" height="11" viewBox="0 0 12 11"><path d="M1 3.500L3.500 1h7v6.500L8 10z" fill="#d6ebfa"/><rect x="1" y="3.500" width="7" height="6.500" rx=".8" fill="#56b2f3"/></svg>
<svg style="left:8px;top:96px" width="11" height="11" viewBox="0 0 11 11"><circle cx="5.300" cy="5.400" r="4.800" fill="#76c3fb"/></svg>
<svg style="left:7px;top:119px" width="12" height="11" viewBox="0 0 12 11"><path d="M1 3.500L3.500 1h7v6L8 9.500z" fill="#9fd0f5"/><rect x="1" y="3.500" width="7" height="6" rx=".8" fill="#56b2f3"/></svg>
<svg style="left:5px;top:139px" width="15" height="15" viewBox="0 0 15 15"><circle cx="7.600" cy="7.300" r="6.200" fill="#4aacf6" stroke="#86c8f8" stroke-width="1"/></svg>
</div>
<!--/MENUS-->

</div>
</body>
</html>
